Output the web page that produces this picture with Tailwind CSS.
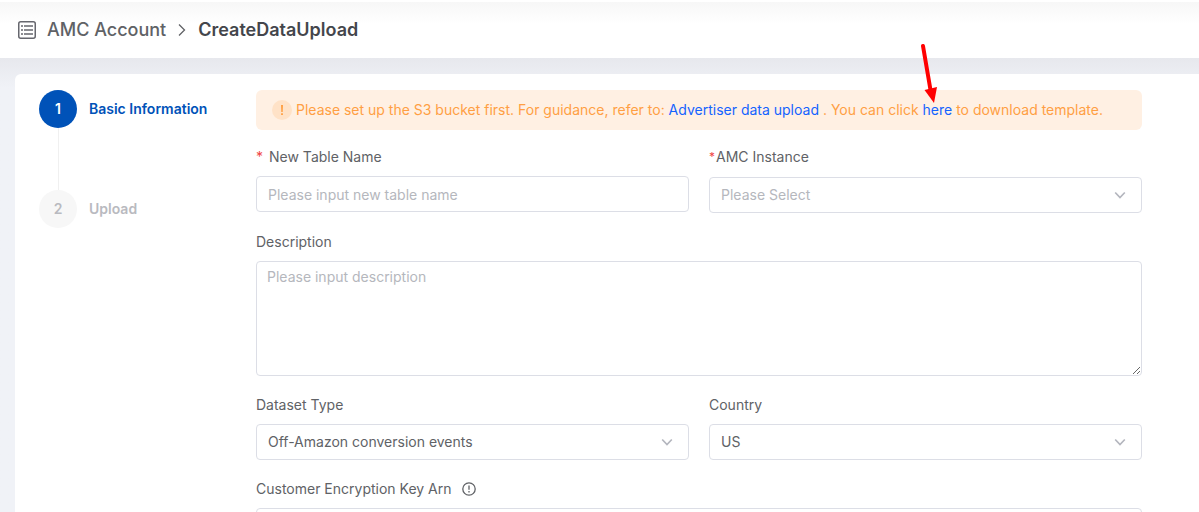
<!DOCTYPE html>
<html lang="en">
<head>
  <meta charset="UTF-8" />
  <meta name="viewport" content="width=device-width, initial-scale=1.0" />
  <title>CreateDataUpload</title>
  <script src="https://cdn.jsdelivr.net/npm/@tailwindcss/browser@4"></script>
</head>
<body class="flex h-screen flex-col overflow-hidden bg-[#f0f2f7] font-['Inter','Liberation_Sans',sans-serif] text-sm text-[#606266]">
  <!-- Header -->
  <header class="shrink-0 border-t-2 border-white bg-linear-to-b from-[#f7f7f7] to-white to-40%">
    <nav aria-label="Breadcrumb" class="flex h-14 items-center px-[18px] text-lg">
      <svg class="mr-[11px] size-[18px] shrink-0" viewBox="0 0 18 18" fill="none" stroke="#66676e" stroke-width="1.5">
        <rect x="0.75" y="0.75" width="16.5" height="16.5" rx="2" />
        <path d="M3 5h2M6 5h9M3 9h2M6 9h9M3 13h2M6 13h9" />
      </svg>
      <a href="#" class="font-medium">AMC Account</a>
      <svg class="mx-3 h-3 w-2 shrink-0" viewBox="0 0 8 12" fill="none" stroke="#606266" stroke-width="1.3">
        <path d="M1 0.5 6.5 6 1 11.5" />
      </svg>
      <span class="font-semibold text-[#44464c]" aria-current="page">CreateDataUpload</span>
    </nav>
  </header>

  <main class="flex min-h-0 flex-1 bg-linear-to-b from-[#e7e8ed] to-[#f0f2f7] to-[30px] pt-4 pl-[15px]">
    <div class="flex min-w-0 flex-1 rounded-tl-md bg-white pt-4 pr-[57px] pl-6">
      <!-- Steps -->
      <ol class="w-[217px] shrink-0 font-semibold">
        <li class="flex gap-3 text-[#0052b8]">
          <div class="flex w-[38px] flex-col items-center">
            <span class="flex size-[38px] items-center justify-center rounded-full bg-[#0052b8] text-white">1</span>
            <span class="h-[62px] w-px bg-[#f0f0f0]"></span>
          </div>
          <span class="leading-[38px]">Basic Information</span>
        </li>
        <li class="flex gap-3 text-[#b9bac0]">
          <span class="flex size-[38px] items-center justify-center rounded-full bg-[#f7f7f7]">2</span>
          <span class="leading-[38px]">Upload</span>
        </li>
      </ol>

      <form class="min-w-0 flex-1">
        <!-- Alert -->
        <div class="mb-4 flex h-10 items-center rounded-md bg-[#fff0e3] px-4 text-[#ff9f43]">
          <svg class="mr-1 size-5 shrink-0" viewBox="0 0 20 20">
            <circle cx="10" cy="10" r="10" fill="#ffe2c7" />
            <path d="M9 5h2l-.3 7H9.3zM9.1 13.3h1.8V15H9.1z" fill="#ff9f43" />
          </svg>
          <p>Please set up the S3 bucket first. For guidance, refer to: <a href="#" class="text-[#1463ff]">Advertiser data upload</a> . You can click <a href="#" class="relative text-[#1463ff]">here<svg class="pointer-events-none absolute -top-[57px] -left-1 h-[60px] w-5" viewBox="0 0 20 60" fill="#f00">
                <path d="M4 2 11.5 46" stroke="#f00" stroke-width="4" stroke-linecap="round" />
                <path d="m5.5 46 12.5-3-3 16z" />
              </svg></a> to download template.</p>
        </div>

        <div class="grid grid-cols-2 items-start gap-x-5 gap-y-[18px]">
          <div>
            <label for="tableName" class="mb-2 flex gap-1.5 leading-[22px]"><span class="text-[#f04545]">*</span> New Table Name</label>
            <input id="tableName" type="text" placeholder="Please input new table name" class="block h-9 w-full rounded border border-[#dcdee6] bg-white px-[11px] placeholder:text-[#b5b7bd]" />
          </div>

          <div>
            <label for="instance" class="mb-[9px] flex gap-px leading-[22px]"><span class="text-xs leading-[22px] text-[#f04545]">*</span>AMC Instance</label>
            <div class="relative">
              <select id="instance" class="block h-9 w-full appearance-none rounded border border-[#dcdee6] bg-white px-[11px] text-[#b5b7bd]">
                <option>Please Select</option>
              </select>
              <svg class="pointer-events-none absolute top-[14px] right-4 h-2 w-3" viewBox="0 0 12 8" fill="none" stroke="#b4b6be" stroke-width="1.7"><path d="m1.2 1.5 4.8 5 4.8-5" /></svg>
            </div>
          </div>

          <div class="col-span-2">
            <label for="description" class="mb-2 block leading-[22px]">Description</label>
            <textarea id="description" placeholder="Please input description" class="block h-[115px] w-full rounded border border-[#dcdee6] bg-white px-[10px] py-[5px] placeholder:text-[#b5b7bd]"></textarea>
          </div>

          <div>
            <label for="datasetType" class="mb-2 block leading-[22px]">Dataset Type</label>
            <div class="relative">
              <select id="datasetType" class="block h-9 w-full appearance-none rounded border border-[#dcdee6] bg-white px-[11px]">
                <option>Off-Amazon conversion events</option>
              </select>
              <svg class="pointer-events-none absolute top-[14px] right-4 h-2 w-3" viewBox="0 0 12 8" fill="none" stroke="#b4b6be" stroke-width="1.7"><path d="m1.2 1.5 4.8 5 4.8-5" /></svg>
            </div>
          </div>

          <div>
            <label for="country" class="mb-2 block leading-[22px]">Country</label>
            <div class="relative">
              <select id="country" class="block h-9 w-full appearance-none rounded border border-[#dcdee6] bg-white px-[11px]">
                <option>US</option>
              </select>
              <svg class="pointer-events-none absolute top-[14px] right-4 h-2 w-3" viewBox="0 0 12 8" fill="none" stroke="#b4b6be" stroke-width="1.7"><path d="m1.2 1.5 4.8 5 4.8-5" /></svg>
            </div>
          </div>

          <div class="col-span-2">
            <label for="keyArn" class="mb-2 flex items-center gap-2.5 leading-[22px]">Customer Encryption Key Arn
              <svg class="size-[14px]" viewBox="0 0 14 14" fill="none" stroke="#606266" stroke-width="1.3">
                <circle cx="7" cy="7" r="6.2" />
                <path d="M7 3.5v4.3M7 9v1.5" />
              </svg>
            </label>
            <input id="keyArn" type="text" class="block h-9 w-full rounded border border-[#dcdee6] bg-white px-[11px]" />
          </div>
        </div>
      </form>
    </div>
  </main>
</body>
</html>
